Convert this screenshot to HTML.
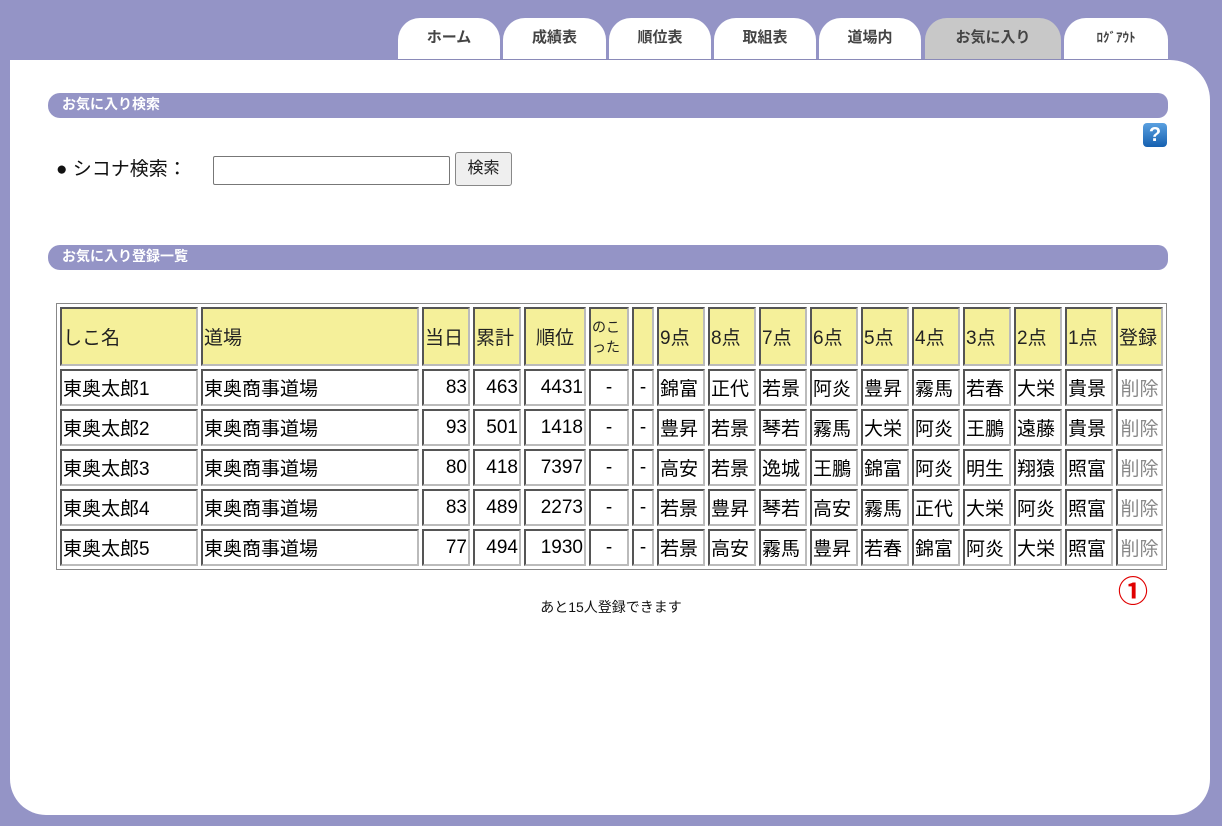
<!DOCTYPE html>
<html><head><meta charset="utf-8"><style>
*{box-sizing:border-box}
body{margin:0;width:1222px;height:826px;background:#9494c6;font-family:"Liberation Sans","Noto Sans CJK JP",sans-serif;position:relative;overflow:hidden}
.panel{position:absolute;left:10px;top:60px;width:1200px;height:755px;background:#fff;border-radius:0 40px 36px 36px}
.tab{position:absolute;top:18px;height:42px;background:#fff;border-radius:22px 22px 0 0;text-align:center;font-size:15px;font-weight:bold;color:#444;line-height:40px}
.tab.on{background:#c8c8c8}
.line{position:absolute;left:398px;top:59px;width:770px;height:1px;background:#8a8ab8}
.bar{position:absolute;left:48px;width:1120px;height:25px;background:#9494c6;border-radius:12px 10px 10px 12px;color:#fff;font-size:14px;font-weight:bold;line-height:23px;padding-left:14px}
.help{position:absolute;left:1143px;top:123px;width:24px;height:24px;border-radius:4px;background:linear-gradient(#5aa0e0,#1560b0);color:#fff;font:bold 20px/24px "Liberation Sans",sans-serif;text-align:center}
table{position:absolute;left:56px;top:303px;width:1108px;height:264px;border:1px solid #888;border-spacing:3px;table-layout:fixed;font-size:19px}
td{border:2px solid;border-color:#555 #bbb #bbb #555;padding:0 1px;white-space:nowrap;overflow:hidden;height:37px;vertical-align:middle}
tr.h td{background:#f5f09a;height:59px;color:#222}
.r{text-align:right}.c{text-align:center}
.del{color:#888;text-align:center}
</style></head><body>
<div class="tab" style="left:398px;width:102px">ホーム</div>
<div class="tab" style="left:503px;width:103px">成績表</div>
<div class="tab" style="left:609px;width:102px">順位表</div>
<div class="tab" style="left:714px;width:102px">取組表</div>
<div class="tab" style="left:819px;width:102px">道場内</div>
<div class="tab on" style="left:925px;width:136px">お気に入り</div>
<div class="tab" style="left:1064px;width:104px;font-size:13px">ﾛｸﾞｱｳﾄ</div>
<div class="panel"></div>
<div class="line"></div>
<div class="bar" style="top:93px">お気に入り検索</div>
<div class="help">?</div>
<div style="position:absolute;left:56px;top:156px;font-size:19px;line-height:28px;color:#111">● シコナ検索：</div>
<div style="position:absolute;left:213px;top:156px;width:237px;height:29px;border:1px solid #777;border-radius:2px;background:#fff"></div>
<div style="position:absolute;left:455px;top:152px;width:57px;height:34px;border:1px solid #888;border-radius:3px;background:#efefef;font-size:16px;line-height:32px;text-align:center;color:#222">検索</div>
<div class="bar" style="top:245px">お気に入り登録一覧</div>
<table>
<colgroup><col style="width:138px"><col style="width:218px"><col style="width:48px"><col style="width:48px"><col style="width:62px"><col style="width:40px"><col style="width:22px"><col style="width:48px"><col style="width:48px"><col style="width:48px"><col style="width:48px"><col style="width:48px"><col style="width:48px"><col style="width:48px"><col style="width:48px"><col style="width:48px"><col style="width:47px"></colgroup>
<tr class="h"><td>しこ名</td><td>道場</td><td>当日</td><td>累計</td><td class="c">順位</td><td style="font-size:14px;line-height:20px;white-space:normal">のこった</td><td></td><td>9点</td><td>8点</td><td>7点</td><td>6点</td><td>5点</td><td>4点</td><td>3点</td><td>2点</td><td>1点</td><td>登録</td></tr>
<tr><td>東奥太郎1</td><td>東奥商事道場</td><td class="r">83</td><td class="r">463</td><td class="r">4431</td><td class="c">-</td><td class="c">-</td><td>錦富</td><td>正代</td><td>若景</td><td>阿炎</td><td>豊昇</td><td>霧馬</td><td>若春</td><td>大栄</td><td>貴景</td><td class="del">削除</td></tr>
<tr><td>東奥太郎2</td><td>東奥商事道場</td><td class="r">93</td><td class="r">501</td><td class="r">1418</td><td class="c">-</td><td class="c">-</td><td>豊昇</td><td>若景</td><td>琴若</td><td>霧馬</td><td>大栄</td><td>阿炎</td><td>王鵬</td><td>遠藤</td><td>貴景</td><td class="del">削除</td></tr>
<tr><td>東奥太郎3</td><td>東奥商事道場</td><td class="r">80</td><td class="r">418</td><td class="r">7397</td><td class="c">-</td><td class="c">-</td><td>高安</td><td>若景</td><td>逸城</td><td>王鵬</td><td>錦富</td><td>阿炎</td><td>明生</td><td>翔猿</td><td>照富</td><td class="del">削除</td></tr>
<tr><td>東奥太郎4</td><td>東奥商事道場</td><td class="r">83</td><td class="r">489</td><td class="r">2273</td><td class="c">-</td><td class="c">-</td><td>若景</td><td>豊昇</td><td>琴若</td><td>高安</td><td>霧馬</td><td>正代</td><td>大栄</td><td>阿炎</td><td>照富</td><td class="del">削除</td></tr>
<tr><td>東奥太郎5</td><td>東奥商事道場</td><td class="r">77</td><td class="r">494</td><td class="r">1930</td><td class="c">-</td><td class="c">-</td><td>若景</td><td>高安</td><td>霧馬</td><td>豊昇</td><td>若春</td><td>錦富</td><td>阿炎</td><td>大栄</td><td>照富</td><td class="del">削除</td></tr>
</table>
<div style="position:absolute;left:0;width:1222px;top:597px;text-align:center;font-size:14px;color:#111">あと15人登録できます</div>
<div style="position:absolute;left:1114px;top:576px;width:38px;text-align:center;font-size:30px;font-weight:bold;color:#e00000;line-height:34px">①</div>
</body></html>
